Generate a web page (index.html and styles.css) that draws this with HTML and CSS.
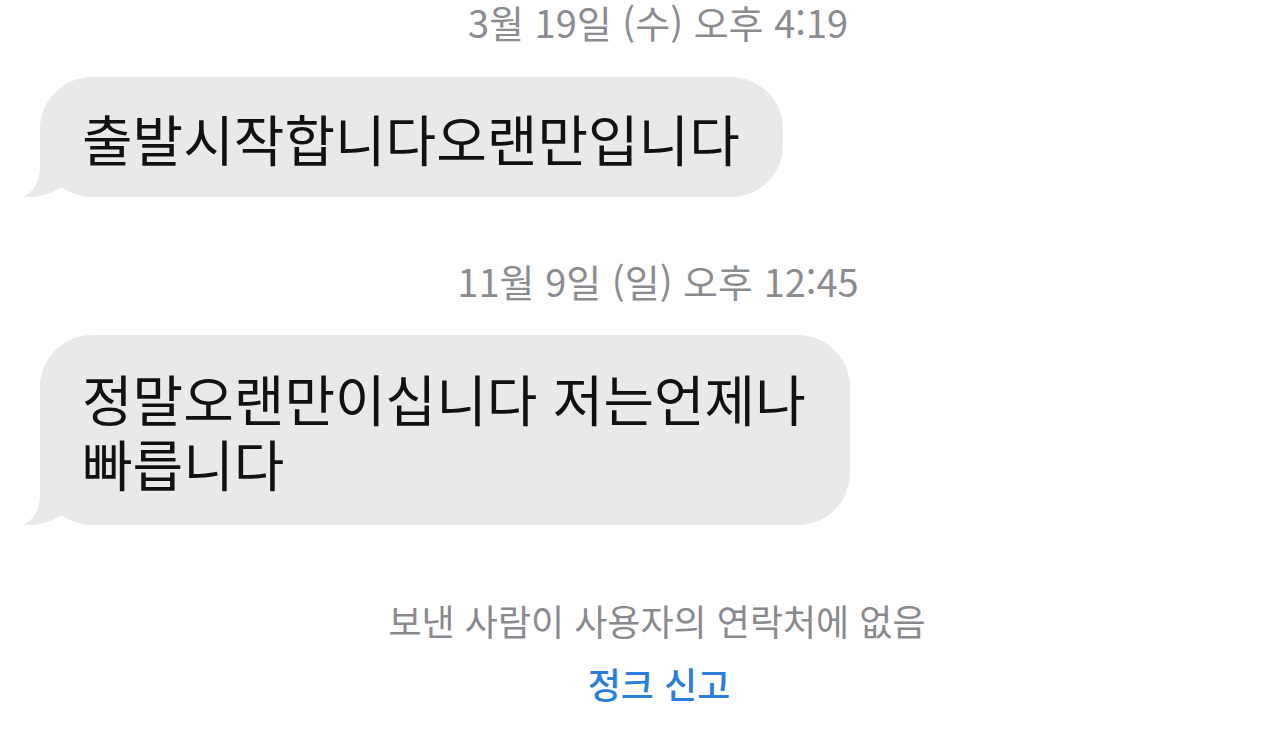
FILE: index.html
```html
<!DOCTYPE html>
<html lang="ko">
<head>
    <meta charset="UTF-8">
    <meta name="viewport" content="width=device-width, initial-scale=1.0">
    <title>메시지</title>
    <link rel="stylesheet" href="styles.css">
</head>
<body>
    <div class="thread">
        <div class="stamp stamp-first">3월 19일 (수) 오후 4:19</div>

        <div class="row">
            <div class="bubble bubble-one">
                출발시작합니다오랜만입니다
                <svg class="tail" width="60" height="50" viewBox="0 0 60 50">
                    <path d="M20 0 L20 18 C20 36 13 46 2 50 C16 51 29 48 40 41 L60 41 L60 0 Z" fill="#e9e9eb"/>
                </svg>
            </div>
        </div>

        <div class="stamp stamp-second">11월 9일 (일) 오후 12:45</div>

        <div class="row">
            <div class="bubble bubble-two">
                정말오랜만이십니다 저는언제나<br>빠릅니다
                <svg class="tail" width="60" height="50" viewBox="0 0 60 50">
                    <path d="M20 0 L20 18 C20 36 13 46 2 50 C16 51 29 48 40 41 L60 41 L60 0 Z" fill="#e9e9eb"/>
                </svg>
            </div>
        </div>

        <div class="notice">보낸 사람이 사용자의 연락처에 없음</div>
        <div class="report">정크 신고</div>
    </div>
</body>
</html>
```

FILE: styles.css
```css
body {
    margin: 0;
    background: #ffffff;
    font-family: "Noto Sans CJK KR", "Noto Sans", sans-serif;
}
.thread {
    display: flex;
    flex-direction: column;
    width: 1280px;
    height: 739px;
    overflow: hidden;
    padding-top: 2px;
    box-sizing: border-box;
}
.stamp {
    text-align: center;
    color: #8c8c90;
    font-size: 38px;
    line-height: 40px;
    padding-left: 36px;
}
.stamp-second {
    margin-top: 64px;
}
.row {
    display: flex;
    padding-left: 40px;
}
.bubble {
    position: relative;
    box-sizing: border-box;
    background: #e9e9eb;
    color: #111111;
    font-size: 55px;
    line-height: 65px;
    border-radius: 52px;
    padding: 28px 43px 27px 42px;
    white-space: nowrap;
}
.bubble-one {
    margin-top: 35px;
}
.bubble-two {
    margin-top: 34px;
    width: 810px;
    padding-top: 30px;
    padding-bottom: 30px;
}
.tail {
    position: absolute;
    left: -20px;
    bottom: 0;
}
.notice {
    margin-top: 75px;
    text-align: center;
    color: #8a8a8e;
    font-size: 36px;
    line-height: 40px;
    padding-left: 34px;
}
.report {
    margin-top: 23px;
    text-align: center;
    color: #2a7fdc;
    font-size: 36px;
    font-weight: 500;
    line-height: 40px;
    padding-left: 38px;
}
```
